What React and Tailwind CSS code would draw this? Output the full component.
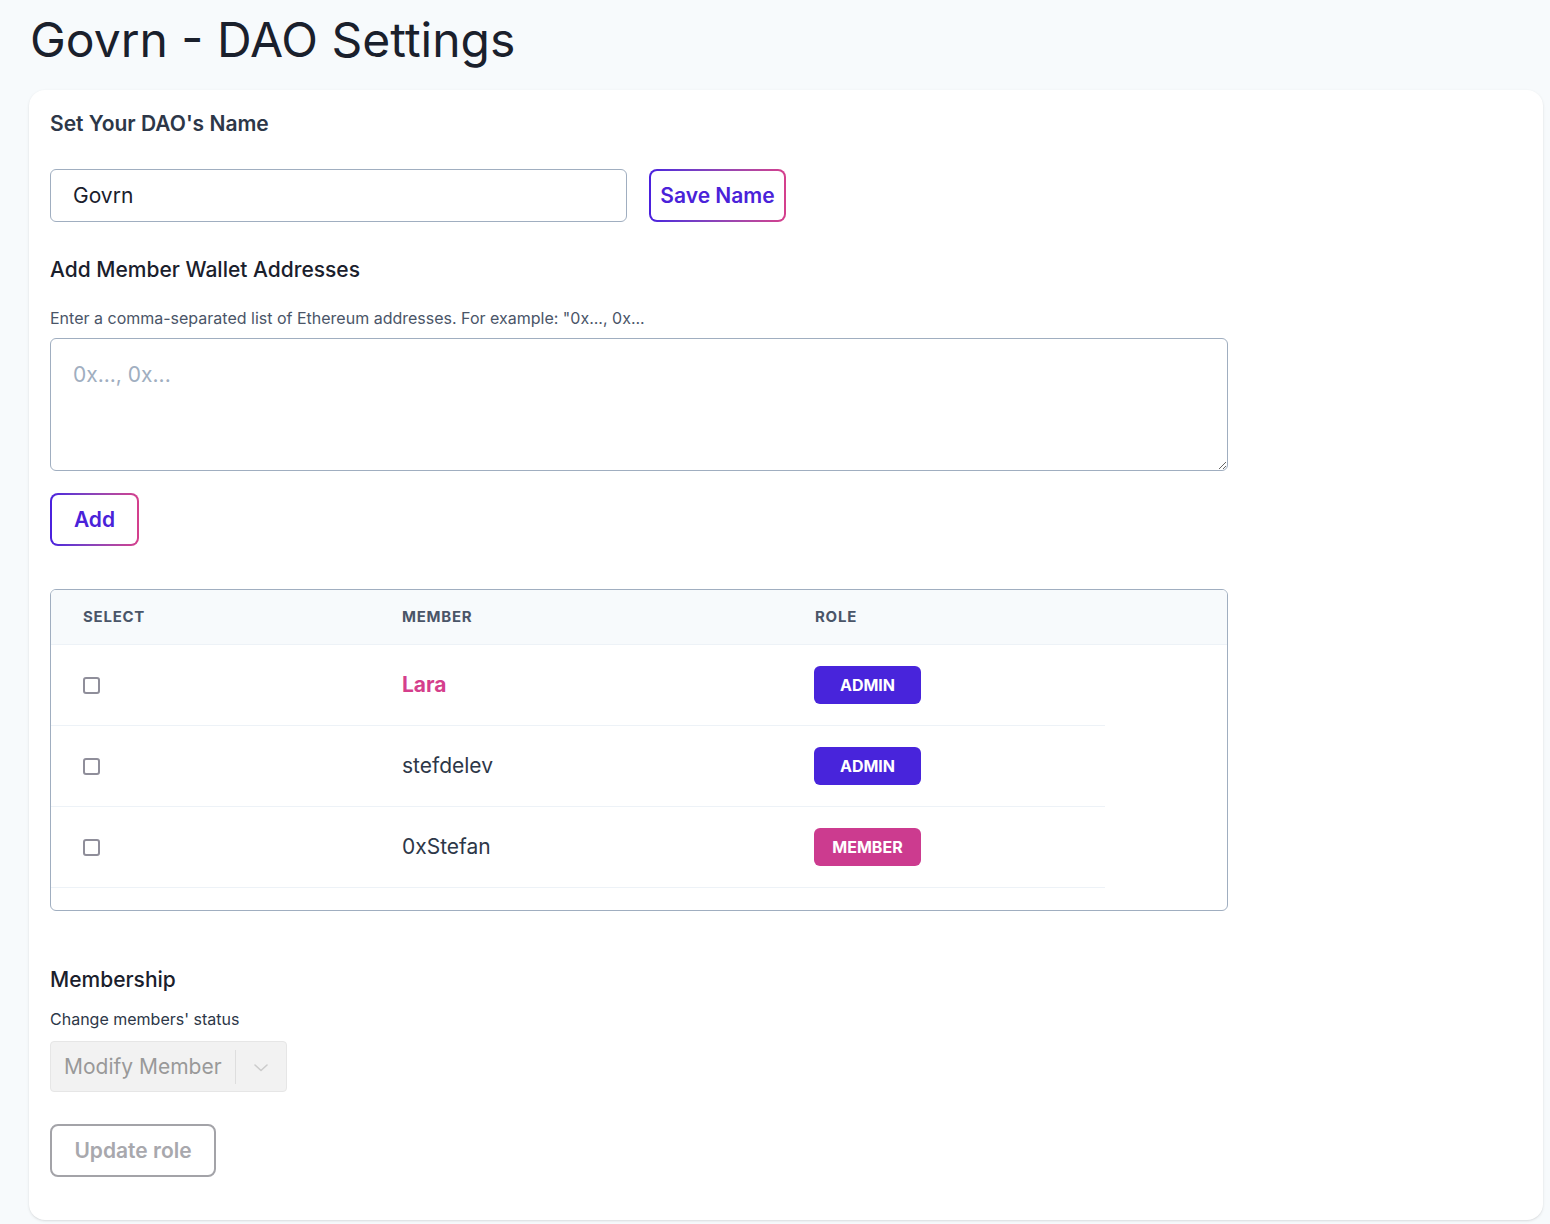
import { useState } from 'react';

const members = [
  { name: 'Lara', role: 'ADMIN', me: true },
  { name: 'stefdelev', role: 'ADMIN' },
  { name: '0xStefan', role: 'MEMBER' },
];

function GradientButton({ children, className = '' }) {
  return (
    <div className={`rounded-lg bg-gradient-to-r from-[#4a1fde] to-[#d53f8c] p-[2px] ${className}`}>
      <button className="w-full h-full rounded-[6px] bg-white text-[21px] font-semibold text-[#4a22d9]">
        {children}
      </button>
    </div>
  );
}

export default function App() {
  const [name, setName] = useState('Govrn');
  const [addresses, setAddresses] = useState('');

  return (
    <div className="min-h-screen bg-[#f7fafc] pb-[4px] font-['Inter',sans-serif] text-[#2d3748]">
      <h1 className="pt-[16px] pl-[30px] text-[48px] leading-none text-[#1a202c]">Govrn - DAO Settings</h1>

      <div className="mt-[26px] ml-[29px] mr-[7px] rounded-2xl bg-white px-[21px] pt-[20px] pb-[43px] shadow-sm">
        {/* Name */}
        <h2 className="text-[21px] leading-[28px] font-semibold">Set Your DAO's Name</h2>
        <div className="mt-[31px] flex items-center gap-[22px]">
          <input
            value={name}
            onChange={(e) => setName(e.target.value)}
            className="w-[577px] h-[53px] rounded-md border border-[#a0aec0] px-[22px] text-[21px] text-[#1a202c] outline-none"
          />
          <GradientButton className="w-[137px] h-[53px]">Save Name</GradientButton>
        </div>

        {/* Addresses */}
        <h2 className="mt-[34px] text-[21px] leading-[28px] font-medium text-[#1a202c]">Add Member Wallet Addresses</h2>
        <p className="mt-[22px] text-[16px] leading-[24px] text-[#4a5568]">
          Enter a comma-separated list of Ethereum addresses. For example: "0x..., 0x...
        </p>
        <textarea
          value={addresses}
          onChange={(e) => setAddresses(e.target.value)}
          placeholder="0x..., 0x..."
          className="mt-[8px] block w-[1178px] h-[133px] rounded-md border border-[#a0aec0] px-[22px] py-[22px] text-[21px] leading-[28px] outline-none placeholder:text-[#a0aec0]"
        />
        <GradientButton className="mt-[22px] w-[89px] h-[53px]">Add</GradientButton>

        <div className="mt-[43px] w-[1178px] h-[322px] overflow-hidden rounded-md border border-[#a0aec0]">
          <div className="flex h-[55px] items-center border-b border-[#edf2f7] bg-[#f7fafc] text-[15px] font-bold tracking-wider text-[#4a5568]">
            <div className="w-[319px] pl-[32px]">SELECT</div>
            <div className="w-[413px] pl-[32px]">MEMBER</div>
            <div className="pl-[32px]">ROLE</div>
          </div>
          <div className="w-[1054px]">
            {members.map((m) => (
              <div key={m.name} className="flex h-[81px] items-center border-b border-[#edf2f7]">
                <div className="w-[319px] pl-[32px]">
                  <div className="w-[17px] h-[17px] rounded-[3px] border-2 border-[#8f8e9a]" />
                </div>
                <div
                  className={`w-[413px] pl-[32px] text-[21px] ${
                    m.me ? 'font-bold text-[#d53f8c]' : 'text-[#2d3748]'
                  }`}
                >
                  {m.name}
                </div>
                <div className="pl-[31px]">
                  <span
                    className={`flex w-[107px] h-[38px] items-center justify-center rounded-md text-[16px] font-bold text-white ${
                      m.role === 'ADMIN' ? 'bg-[#4824db]' : 'bg-[#cc3b8f]'
                    }`}
                  >
                    {m.role}
                  </span>
                </div>
              </div>
            ))}
            <div className="flex h-[81px] items-center">
              <div className="w-[319px]" />
              <div className="w-[413px]" />
              <div className="pl-[31px]">
                <span className="block w-[107px] h-[38px] rounded-md bg-[#cc3b8f]" />
              </div>
            </div>
          </div>
        </div>

        {/* Membership */}
        <h2 className="mt-[55px] text-[21px] leading-[28px] font-medium text-[#1a202c]">Membership</h2>
        <p className="mt-[13px] text-[16px] leading-[24px] text-[#2d3748]">Change members' status</p>
        <div className="mt-[10px] flex w-[237px] h-[51px] items-center rounded-[4px] border border-[#e6e6e6] bg-[#f2f2f2]">
          <span className="flex-1 pl-[13px] text-[21px] text-[#999999]">Modify Member</span>
          <span className="h-[34px] w-px bg-[#dedede]" />
          <span className="px-[15px] text-[#cccccc]">
            <svg width="20" height="20" viewBox="0 0 20 20" fill="none" stroke="currentColor" strokeWidth="1.6" strokeLinecap="round" strokeLinejoin="round">
              <path d="M4 8l6 5.5L16 8" />
            </svg>
          </span>
        </div>
        <button className="mt-[32px] w-[166px] h-[53px] rounded-lg border-2 border-[#a3a3a8] text-[21px] font-semibold text-[#a8a8ad]">
          Update role
        </button>
      </div>
    </div>
  );
}
